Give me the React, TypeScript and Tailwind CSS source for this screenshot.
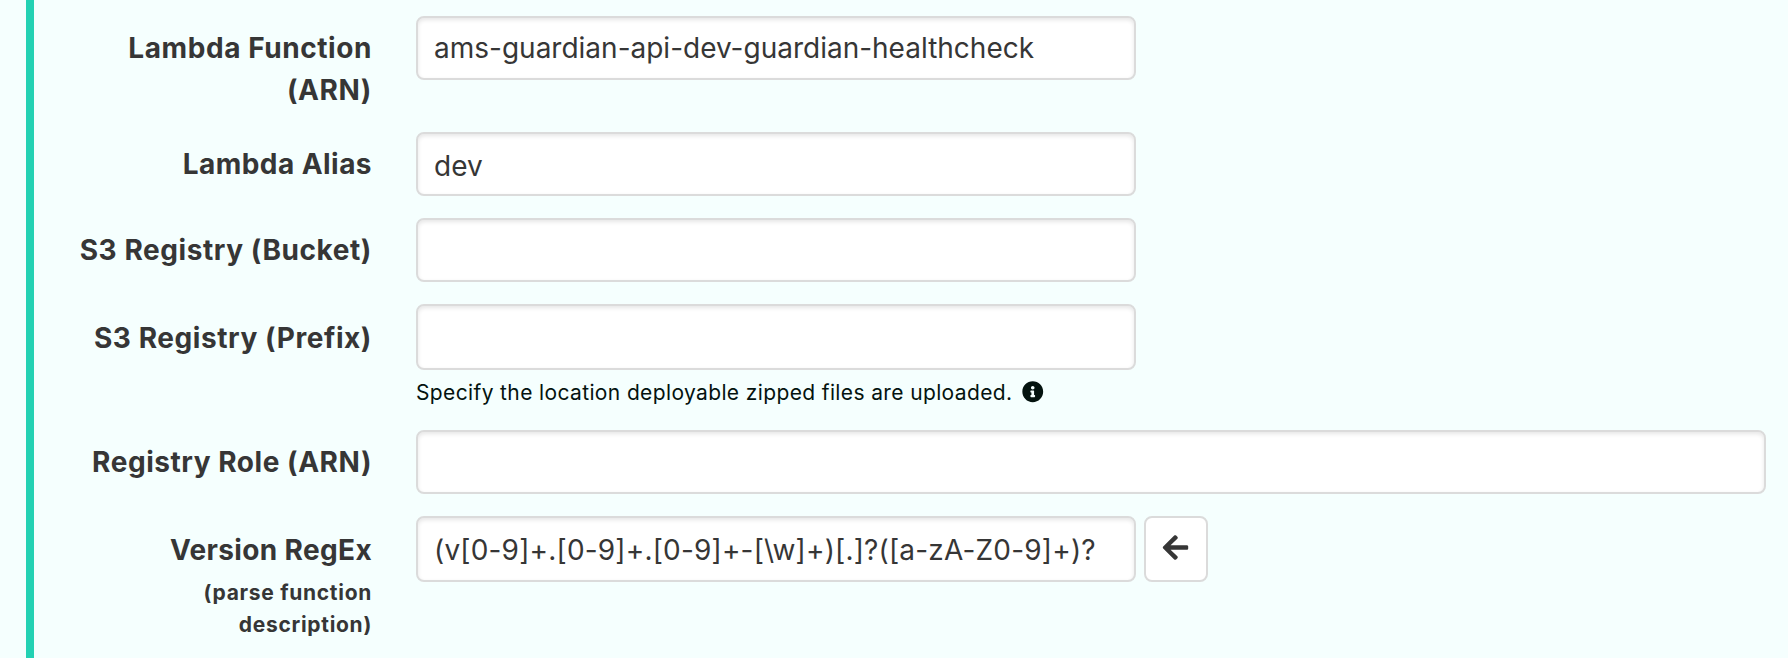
import type { ReactNode } from "react";
import { FaArrowLeft, FaInfoCircle } from "react-icons/fa";

const INPUT =
  "block rounded-[8px] border-2 border-[#dbdbdb] bg-white px-4 text-[28px] text-[#363636] outline-none shadow-[inset_0_2px_4px_rgba(10,10,10,0.1)]";

function Row({ className, label, children }: { className: string; label: ReactNode; children: ReactNode }) {
  return (
    <div className={`flex items-start ${className}`}>
      <div className="flex w-[338px] shrink-0 flex-col items-end">{label}</div>
      <div className="ml-[44px]">{children}</div>
    </div>
  );
}

function Label({ className, children }: { className: string; children: ReactNode }) {
  return (
    <label className={`text-right text-[28px] leading-[42px] font-bold whitespace-nowrap ${className}`}>{children}</label>
  );
}

export default function App() {
  return (
    <div className="h-[658px] overflow-hidden bg-[#f5fffe] pl-[26px] font-[Inter,sans-serif] text-[#363636]">
      <div className="h-full border-l-8 border-[#23d1b3] pt-4">
        <Row
          className="h-[116px]"
          label={
            <>
              <Label className="mt-[11px] tracking-[0.57px]">Lambda Function</Label>
              <Label className="tracking-[0.57px]">(ARN)</Label>
            </>
          }
        >
          <input className={`${INPUT} h-[64px] w-[720px]`} defaultValue="ams-guardian-api-dev-guardian-healthcheck" />
        </Row>
        <Row className="h-[86px]" label={<Label className="mt-[11px] tracking-[0.45px]">Lambda Alias</Label>}>
          <input className={`${INPUT} h-[64px] w-[720px] pt-[3px]`} defaultValue="dev" />
        </Row>
        <Row className="h-[86px]" label={<Label className="mt-[11px] tracking-[0.57px]">S3 Registry (Bucket)</Label>}>
          <input className={`${INPUT} h-[64px] w-[720px]`} />
        </Row>
        <Row className="h-[126px]" label={<Label className="mt-[13px] tracking-[0.57px]">S3 Registry (Prefix)</Label>}>
          <input className={`${INPUT} h-[66px] w-[720px]`} />
          <p className="mt-[7px] flex items-center text-[21px] leading-[32px] text-[#04130f]">
            <span className="tracking-[0.37px] whitespace-nowrap">
              Specify the location deployable zipped files are uploaded.
            </span>
            <FaInfoCircle className="mb-[2px] ml-[10px] size-[21.5px] shrink-0" />
          </p>
        </Row>
        <Row className="h-[86px]" label={<Label className="mt-[11px] tracking-[0.54px]">Registry Role (ARN)</Label>}>
          <input className={`${INPUT} h-[64px] w-[1350px]`} />
        </Row>
        <Row
          className=""
          label={
            <>
              <Label className="mt-[13px] tracking-[0.35px]">Version RegEx</Label>
              <span className="mt-[6px] text-right text-[21px] leading-[32px] font-bold tracking-[0.7px]">
                (parse function
                <br />
                description)
              </span>
            </>
          }
        >
          <div className="flex gap-2">
            <input
              className={`${INPUT} h-[66px] w-[720px] pt-[2px] tracking-[0.18px]`}
              defaultValue="(v[0-9]+.[0-9]+.[0-9]+-[\w]+)[.]?([a-zA-Z0-9]+)?"
            />
            <button className="flex h-[66px] w-[64px] items-center justify-center rounded-[8px] border-2 border-[#dbdbdb] bg-white pr-[1px] pb-[4px]">
              <FaArrowLeft className="size-[29px]" />
            </button>
          </div>
        </Row>
      </div>
    </div>
  );
}
